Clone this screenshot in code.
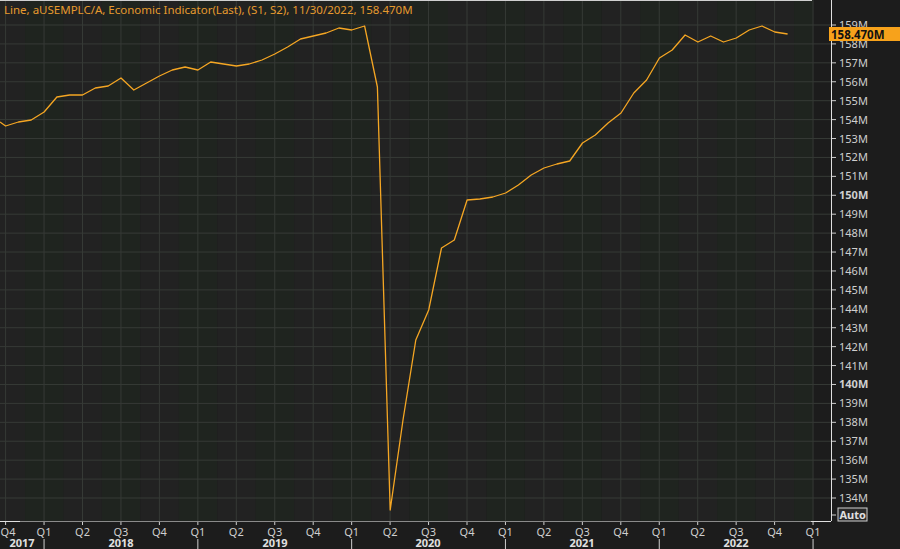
import React from "react";

const ys = [122, 126, 122, 120, 112, 97, 95, 95, 88, 86, 78, 90, 83, 76, 70, 67, 70, 62, 64, 66, 64, 60, 54, 47, 39, 36, 33, 28, 30, 26, 87, 510, 420, 340, 310, 248, 240, 200, 199, 197, 193, 185, 175, 168, 164, 161, 143, 135, 123, 113, 93, 80, 58, 50, 35, 42, 36, 42, 38, 30, 26, 32, 34];
const monthX = (i) => 5.6 + 12.82 * i;
const points = ys.map((y, k) => `${Math.max(0, monthX(k - 1)).toFixed(1)},${y}`).join(" ");

const qLabels = ["Q4", "Q1", "Q2", "Q3", "Q4", "Q1", "Q2", "Q3", "Q4", "Q1", "Q2", "Q3", "Q4", "Q1", "Q2", "Q3", "Q4", "Q1", "Q2", "Q3", "Q4", "Q1"];
const qX = (i) => 5.6 + 38.45 * i;
const years = [
  { t: "2017", x: 22 },
  { t: "2018", x: 121 },
  { t: "2019", x: 275 },
  { t: "2020", x: 428 },
  { t: "2021", x: 582 },
  { t: "2022", x: 736 },
];
const yearLines = [1, 5, 9, 13, 17, 21];
const yLabels = Array.from({ length: 26 }, (_, i) => 159 - i);
const yPos = (v) => 25 + (159 - v) * 18.92;

export default function App() {
  return (
    <div className="w-[900px] h-[549px] bg-[#1c1c1c] overflow-hidden font-['Verdana','DejaVu_Sans',sans-serif]">
      <svg width="900" height="549" viewBox="0 0 900 549">
        {qLabels.map((_, i) => (
          <rect key={i} x={Math.max(0, qX(i) - 19)} y="0" width={i === 21 ? 19 : 38.45} height="521" fill={i % 2 ? "#1f241f" : "#222222"} />
        ))}
        {yLabels.map((v) => (
          <line key={v} x1="0" x2="831" y1={yPos(v)} y2={yPos(v)} stroke="#363a36" strokeWidth="1" />
        ))}
        {qLabels.map((_, i) => (
          <line key={i} x1={qX(i)} x2={qX(i)} y1="0" y2="521" stroke="#363a36" strokeWidth="1" />
        ))}
        <line x1="0" x2="812" y1="0.5" y2="0.5" stroke="#d0d0d0" />
        <line x1="831.5" x2="831.5" y1="0" y2="521" stroke="#e0e0e0" />
        <line x1="0" x2="831" y1="521.5" y2="521.5" stroke="#8a8a8a" />
        <line x1="0" x2="20" y1="521.5" y2="521.5" stroke="#e0e0e0" />
        <line x1="811" x2="831" y1="521.5" y2="521.5" stroke="#e0e0e0" />
        <polyline points={points} fill="none" stroke="#f5a623" strokeWidth="1.3" strokeLinejoin="round" />
        <text x="4" y="14" fill="#e69a2e" fontSize="11.5">Line, aUSEMPLC/A, Economic Indicator(Last), (S1, S2), 11/30/2022, 158.470M</text>
        {yLabels.map((v) => (
          <g key={v}>
            <line x1="832" x2="836" y1={yPos(v)} y2={yPos(v)} stroke="#cfcfcf" />
            <text x="839" y={yPos(v) + 4} fill="#cfcfcf" fontSize="11" fontWeight={v === 150 || v === 140 ? "bold" : "normal"}>{v}M</text>
          </g>
        ))}
        <line x1="832" x2="836" y1="515" y2="515" stroke="#cfcfcf" />
        <rect x="838" y="508" width="29" height="13" fill="#2a2a2a" stroke="#cfcfcf" />
        <text x="839.5" y="518.5" fill="#e0e0e0" fontSize="11" fontWeight="bold">Auto</text>
        <rect x="829" y="27" width="71" height="14" fill="#f7a21b" />
        <text x="831" y="38.5" fill="#111" fontSize="11.5" fontWeight="bold">158.470M</text>
        {qLabels.map((q, i) => (
          <g key={i}>
            <line x1={qX(i)} x2={qX(i)} y1="522" y2="525" stroke="#cfcfcf" />
            <text x={Math.max(qX(i), 8)} y="536" fill="#cfcfcf" fontSize="11" textAnchor="middle">{q}</text>
          </g>
        ))}
        {yearLines.map((i) => (
          <line key={i} x1={qX(i)} x2={qX(i)} y1="539" y2="549" stroke="#cfcfcf" />
        ))}
        {years.map((y) => (
          <text key={y.t} x={y.x} y="547" fill="#e0e0e0" fontSize="11" fontWeight="bold" textAnchor="middle">{y.t}</text>
        ))}
      </svg>
    </div>
  );
}
